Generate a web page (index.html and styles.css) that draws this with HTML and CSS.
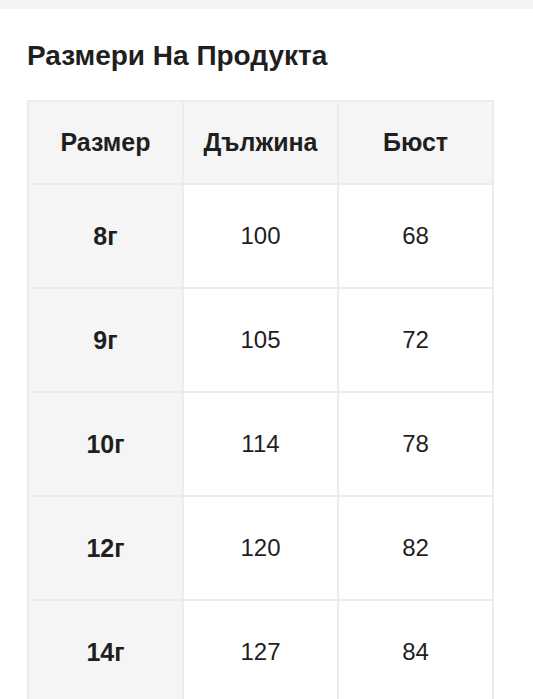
FILE: index.html
```html
<!DOCTYPE html>
<html lang="bg">
<head>
<meta charset="utf-8">
<link rel="stylesheet" href="styles.css">
</head>
<body>
<div class="topbar"></div>
<section class="sizes">
  <h2 class="title">Размери На Продукта</h2>
  <table class="size-table">
    <thead>
      <tr><th>Размер</th><th>Дължина</th><th>Бюст</th></tr>
    </thead>
    <tbody>
      <tr><th>8г</th><td>100</td><td>68</td></tr>
      <tr><th>9г</th><td>105</td><td>72</td></tr>
      <tr><th>10г</th><td>114</td><td>78</td></tr>
      <tr><th>12г</th><td>120</td><td>82</td></tr>
      <tr><th>14г</th><td>127</td><td>84</td></tr>
    </tbody>
  </table>
</section>
</body>
</html>
```

FILE: styles.css
```css
html, body {
  margin: 0;
  padding: 0;
  background: #ffffff;
  font-family: "Liberation Sans", Arial, sans-serif;
  color: #1f1f1f;
}
.topbar {
  height: 9px;
  background: #f4f4f4;
}
.sizes {
  padding: 0 39px 0 27px;
}
.title {
  margin: 0;
  padding-top: 32px;
  height: 91px;
  box-sizing: border-box;
  font-size: 28px;
  font-weight: bold;
  line-height: 30px;
}
.size-table {
  width: 467px;
  border-collapse: collapse;
  table-layout: fixed;
}
.size-table th,
.size-table td {
  border: 2px solid #ececec;
  text-align: center;
  font-size: 24px;
  padding: 0;
}
.size-table th {
  font-size: 25px;
}
.size-table thead th {
  height: 81px;
  background: #f5f5f5;
  font-weight: bold;
}
.size-table tbody th {
  background: #f5f5f5;
  font-weight: bold;
  height: 102px;
}
.size-table tbody td {
  font-weight: normal;
  height: 102px;
}
```
